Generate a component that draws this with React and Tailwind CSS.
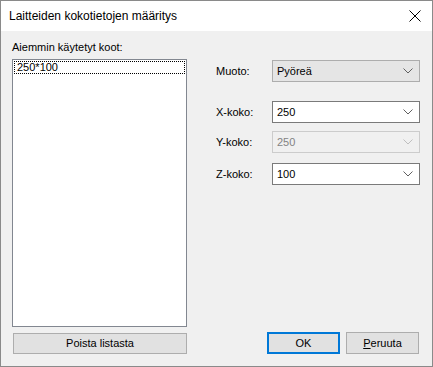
import React from "react";

const Chevron = ({ color = "#606060" }) => (
  <svg width="10" height="6" viewBox="0 0 10 6" className="block">
    <path d="M0.5 0.5 L5 5 L9.5 0.5" fill="none" stroke={color} strokeWidth="1" />
  </svg>
);

const Combo = ({ value, variant }) => {
  const box =
    variant === "gray"
      ? "bg-[#e5e5e5] border-[#adadad] text-black"
      : variant === "disabled"
      ? "bg-[#f0f0f0] border-[#cccccc] text-[#838383]"
      : "bg-white border-[#7a7a7a] text-black";
  return (
    <div className={`w-[148px] h-[22px] border flex items-center ${box}`}>
      <div className="flex-1 pl-[4px] leading-none">{value}</div>
      <div className="w-[20px] flex justify-center pr-[2px]">
        <Chevron color={variant === "disabled" ? "#bfbfbf" : "#606060"} />
      </div>
    </div>
  );
};

const Row = ({ label, children, className = "" }) => (
  <div className={`flex items-center h-[22px] ${className}`}>
    <div className="w-[56px]">{label}</div>
    {children}
  </div>
);

export default function App() {
  return (
    <div
      className="w-[433px] h-[367px] border border-[#8a8a8a] flex flex-col text-[11px] text-black bg-[#f0f0f0]"
      style={{ fontFamily: '"Liberation Sans", Arial, sans-serif' }}
    >
      <div className="h-[30px] bg-white flex items-center justify-between pl-[8px] pr-[11px] shrink-0 text-[12px]">
        <span className="leading-none">Laitteiden kokotietojen määritys</span>
        <svg width="12" height="12" viewBox="0 0 12 12">
          <path d="M0.5 0.5 L11.5 11.5 M11.5 0.5 L0.5 11.5" stroke="#000" strokeWidth="1" />
        </svg>
      </div>
      <div className="flex-1 flex pl-[11px] pr-[12px]">
        <div className="w-[176px] flex flex-col">
          <div className="mt-[8px] h-[16px] leading-[16px]">Aiemmin käytetyt koot:</div>
          <div className="mt-[4px] h-[268px] bg-white border border-[#828790] p-[1px]">
            <div className="h-[13px] border border-dotted border-black flex items-center pl-[2px] leading-none">
              250*100
            </div>
          </div>
          <div className="mt-[6px] ml-[1px] w-[174px] h-[21px] bg-[#e1e1e1] border border-[#adadad] flex items-center justify-center leading-none">
            Poista listasta
          </div>
        </div>
        <div className="flex-1 flex flex-col pl-[29px]">
          <Row label="Muoto:" className="mt-[29px]">
            <Combo value="Pyöreä" variant="gray" />
          </Row>
          <Row label="X-koko:" className="mt-[19px]">
            <Combo value="250" />
          </Row>
          <Row label="Y-koko:" className="mt-[8px]">
            <Combo value="250" variant="disabled" />
          </Row>
          <Row label="Z-koko:" className="mt-[10px]">
            <Combo value="100" />
          </Row>
          <div className="flex-1" />
          <div className="flex justify-end gap-[6px] mb-[12px] pr-[1px]">
            <div className="w-[73px] h-[22px] bg-[#e1e1e1] border-2 border-[#0078d7] flex items-center justify-center leading-none">
              OK
            </div>
            <div className="w-[73px] h-[22px] bg-[#e1e1e1] border border-[#adadad] flex items-center justify-center leading-none">
              <span>
                <span className="underline">P</span>eruuta
              </span>
            </div>
          </div>
        </div>
      </div>
    </div>
  );
}
